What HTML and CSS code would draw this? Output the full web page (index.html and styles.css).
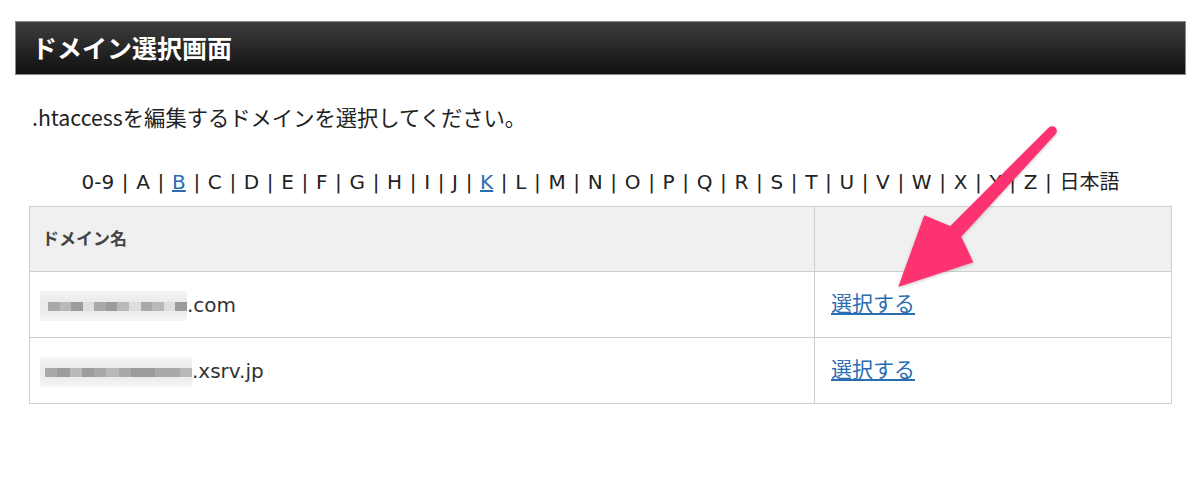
FILE: index.html
```html
<!DOCTYPE html>
<html lang="ja">
<head>
  <meta charset="UTF-8">
  <title>ドメイン選択画面</title>
  <link rel="stylesheet" href="styles.css">
</head>
<body>

<div class="page">
  <h1 class="title-bar">ドメイン選択画面</h1>

  <p class="intro">.htaccessを編集するドメインを選択してください。</p>

  <p class="index">
    0-9 | A | <a href="#">B</a> | C | D | E | F | G | H | I | J | <a href="#">K</a> | L | M | N | O | P | Q | R | S | T | U | V | W | X | Y | Z | 日本語
  </p>

  <table class="domains">
    <tr>
      <th>ドメイン名</th>
      <th class="col-action"></th>
    </tr>
    <tr>
      <td><span class="mosaic m1"><i class="g2"></i><i class="g1"></i><i class="g3"></i><i class="g0"></i><i class="g2"></i><i class="g3"></i><i class="g1"></i><i class="g0"></i><i class="g2"></i><i class="g1"></i><i class="g0"></i><i class="g3"></i></span>.com</td>
      <td class="col-action"><a href="#">選択する</a></td>
    </tr>
    <tr>
      <td><span class="mosaic m2"><i class="g2"></i><i class="g3"></i><i class="g1"></i><i class="g3"></i><i class="g2"></i><i class="g1"></i><i class="g2"></i><i class="g3"></i><i class="g3"></i><i class="g2"></i><i class="g2"></i><i class="g1"></i></span>.xsrv.jp</td>
      <td class="col-action"><a href="#">選択する</a></td>
    </tr>
  </table>

  <!-- annotation arrow -->
  <svg class="arrow" width="200" height="200" viewBox="0 0 200 200">
    <defs>
      <filter id="shadow" x="-20%" y="-20%" width="140%" height="140%">
        <feDropShadow dx="0" dy="1" stdDeviation="1.5" flood-color="#000" flood-opacity="0.25"/>
      </filter>
    </defs>
    <path d="M169.1 18.2 A4 4 0 0 1 174.9 23.8 L80.4 126.6 L92.3 151.8 L19.4 175.9 L44.7 106.2 L70.4 117 Z"
          fill="#fd3370" stroke="#fd3370" stroke-width="1.5" stroke-linejoin="round" filter="url(#shadow)"/>
  </svg>
</div>

</body>
</html>
```

FILE: styles.css
```css
body {
  margin: 0;
  padding: 0;
  background: #fff;
  color: #222;
  font-family: "DejaVu Sans", "Noto Sans CJK JP", sans-serif;
}

.page {
  position: relative;
  padding: 21px 14px 0 15px;
}

.title-bar {
  margin: 0;
  height: 52px;
  line-height: 50px;
  padding-left: 16px;
  font-family: "Noto Sans CJK JP", sans-serif;
  font-size: 25px;
  font-weight: bold;
  color: #fff;
  background: linear-gradient(#3e3e3e, #101010);
  border: 1px solid #8a8a8a;
}

.intro {
  margin: 26px 0 0 17px;
  font-family: "Noto Sans CJK JP", sans-serif;
  font-size: 21.3px;
  line-height: 32px;
}

.index {
  margin: 34px 0 0;
  text-align: center;
  font-size: 20px;
  word-spacing: 1.3px;
  line-height: 30px;
}

.index a {
  color: #2a6db3;
}

.domains {
  width: calc(100% - 28px);
  margin: 9px 14px 0;
  border-collapse: collapse;
  font-size: 20px;
}

.domains th,
.domains td {
  border: 1px solid #cfcfcf;
  text-align: left;
  padding: 0 12px;
}

.domains th {
  height: 60px;
  padding-bottom: 4px;
  background: #f0f0f0;
  font-family: "Noto Sans CJK JP", sans-serif;
  font-size: 17px;
  font-weight: bold;
  color: #444;
}

.domains td {
  height: 62px;
  padding-top: 3px;
  color: #333;
}

.domains td.col-action {
  height: 59px;
  padding-top: 0;
  padding-bottom: 6px;
}

.domains .col-action {
  width: 328px;
  padding-left: 16px;
}

.domains td a {
  color: #2a6db3;
  font-family: "Noto Sans CJK JP", sans-serif;
  font-size: 21px;
}

/* blurred-out domain names */
.mosaic {
  display: inline-flex;
  align-items: center;
  vertical-align: middle;
  height: 30px;
  margin-left: -2px;
  background: linear-gradient(#f6f6f6, #ececec 30%, #ececec 70%, #f6f6f6);
  filter: blur(0.6px);
}

.mosaic.m1 {
  width: 147px;
  padding-left: 8px;
  box-sizing: border-box;
}

.mosaic.m2 {
  width: 152px;
  padding-left: 5px;
  box-sizing: border-box;
}

.mosaic i {
  display: block;
  flex: 1;
  height: 9px;
}

.mosaic .g0 { background: #dedede; }
.mosaic .g1 { background: #b9b9b9; }
.mosaic .g2 { background: #a9a9a9; }
.mosaic .g3 { background: #9c9c9c; }

.arrow {
  position: absolute;
  left: 880px;
  top: 110px;
}
```
